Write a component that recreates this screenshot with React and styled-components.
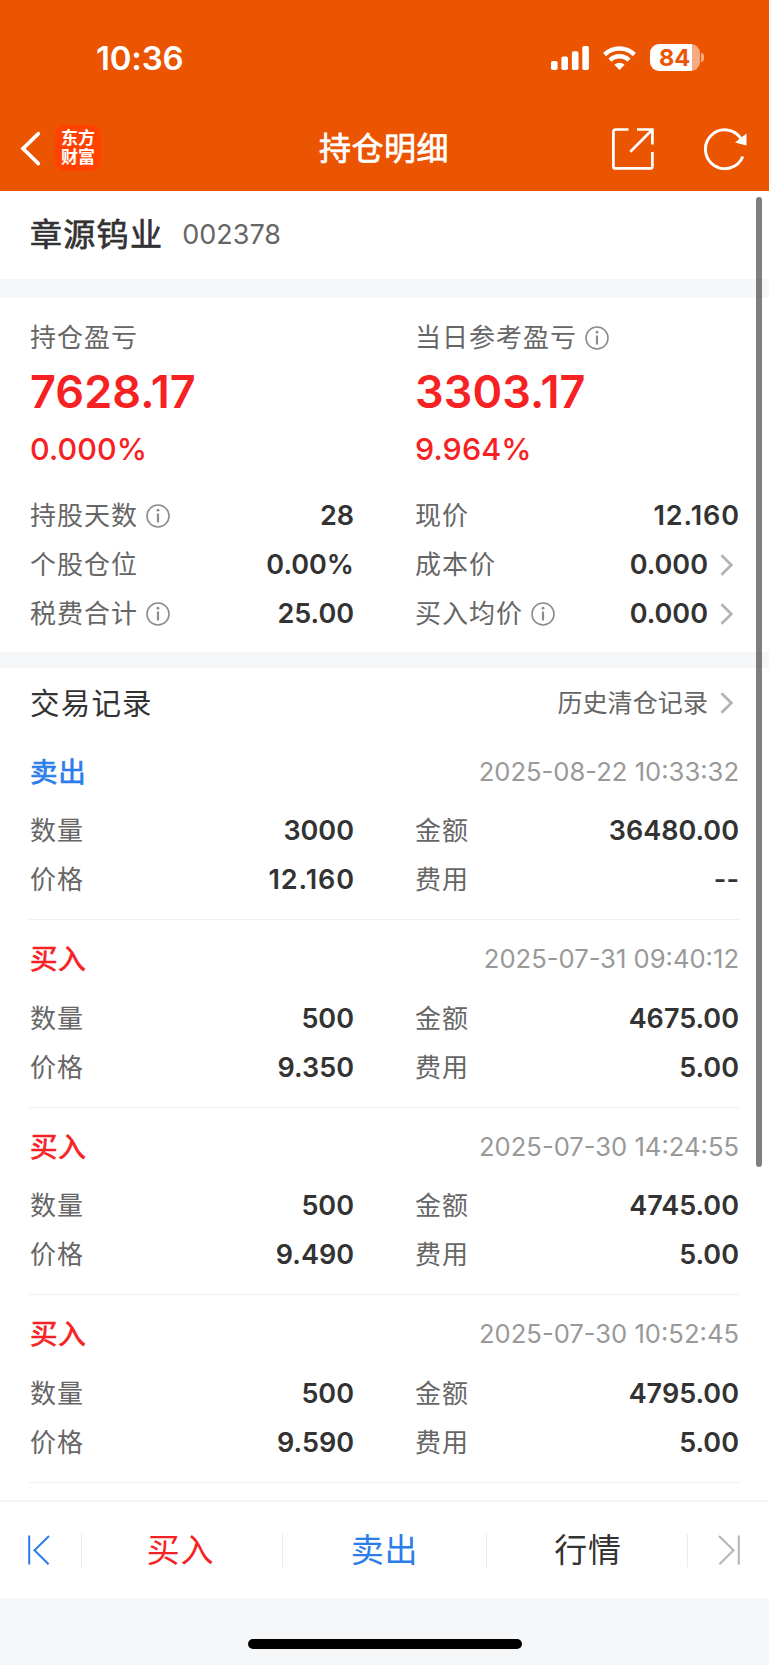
import React from "react";
import styled, { createGlobalStyle } from "styled-components";

const GlobalStyle = createGlobalStyle`
  * { box-sizing: border-box; }
  body {
    margin: 0;
    background: #f6f7f9;
    font-family: Inter, "Noto Sans CJK SC", sans-serif;
    color: #333;
  }
`;

const Screen = styled.div`
  position: relative;
  width: 769px;
  height: 1665px;
  overflow: hidden;
  display: flex;
  flex-direction: column;
  background: #f6f7f9;
`;

const Header = styled.header`
  height: 191px;
  flex: none;
  background: #eb5502;
  color: #fff;
`;

const StatusBar = styled.div`
  height: 106px;
  padding: 9px 65px 0 96px;
  display: flex;
  align-items: center;
  justify-content: space-between;
`;

const Clock = styled.span`
  font-size: 33px;
  font-weight: 600;
  line-height: 40px;
  letter-spacing: -0.2px;
`;

const StatusIcons = styled.div`
  display: flex;
  align-items: center;
`;

const SignalIcon = styled.svg`
  width: 38px;
  height: 24px;
  margin-right: 14px;
`;

const WifiIcon = styled.svg`
  width: 33px;
  height: 24px;
  margin-right: 14px;
`;

const Battery = styled.div`
  width: 50px;
  height: 27px;
  border-radius: 9px;
  background: linear-gradient(to right, #fff 42px, #f5aa80 42px);
  color: #eb5502;
  font-size: 23.5px;
  font-weight: 700;
  line-height: 28px;
  padding-right: 1px;
  text-align: center;
`;

const BatteryNub = styled.div`
  width: 3px;
  height: 9px;
  margin-left: 1px;
  border-radius: 0 3px 3px 0;
  background: #f5aa80;
`;

const NavBar = styled.div`
  height: 85px;
  padding: 0 22.5px 0 20px;
  display: grid;
  grid-template-columns: 1fr auto 1fr;
  align-items: center;
`;

const NavSide = styled.div`
  display: flex;
  align-items: center;
  gap: ${(p) => p.$gap}px;
  justify-content: ${(p) => (p.$end ? "flex-end" : "flex-start")};
`;

const NavTitle = styled.h1`
  margin: 0;
  padding-left: 1.5px;
  font-size: 32px;
  font-weight: 400;
  line-height: 40px;
  letter-spacing: 0.5px;
  -webkit-text-stroke: 0.7px #fff;
`;

const Logo = styled.div`
  width: 46px;
  height: 46px;
  margin-bottom: 2px;
  border-radius: 9px;
  background: #ff4200;
  font-size: 17px;
  font-weight: 700;
  line-height: 19px;
  padding-top: 4px;
  text-align: center;
`;

const Panel = styled.section`
  flex: none;
  background: #fff;
  padding: ${(p) => p.$pad || "0 30px"};
  margin-bottom: ${(p) => p.$after || 0}px;
`;

const StockLine = styled.div`
  height: 88px;
  display: flex;
  align-items: center;
`;

const StockName = styled.h2`
  margin: 0 19px 0 0;
  font-size: 32px;
  font-weight: 400;
  letter-spacing: 1.3px;
  line-height: 44px;
  -webkit-text-stroke: 0.7px #333;
`;

const StockCode = styled.span`
  font-size: 27px;
  line-height: 44px;
  color: #666;
`;

const Columns = styled.div`
  display: grid;
  grid-template-columns: 1fr 1fr;
  column-gap: 61px;
`;

const Label = styled.span`
  display: flex;
  align-items: center;
  gap: 8px;
  font-size: 26px;
  line-height: 40px;
  letter-spacing: 1px;
  color: #666;
`;

const BigValue = styled.div`
  margin-top: 4px;
  font-size: 45px;
  font-weight: 600;
  line-height: 60px;
  letter-spacing: 0.1px;
  color: #f62123;
`;

const Percent = styled.div`
  margin-top: 7px;
  font-size: 30.5px;
  font-weight: 550;
  line-height: 40px;
  letter-spacing: 0.1px;
  margin-bottom: 22px;
  color: #f62123;
`;

const Row = styled.div`
  height: 49px;
  display: flex;
  align-items: center;
  justify-content: space-between;
`;

const Value = styled.span`
  display: flex;
  align-items: center;
  font-size: 27px;
  font-weight: 600;
  line-height: 40px;
  letter-spacing: ${(p) => (p.$wide ? 0.9 : 0)}px;
  margin-right: ${(p) => (p.$wide ? -0.9 : 0)}px;
`;

const Arrow = styled.svg`
  width: 13px;
  height: 22px;
  margin: 0 6px 0 12px;
`;

const ListArea = styled.section`
  height: 832px;
  flex: none;
  overflow: hidden;
  background: #fff;
  padding: 0 29px;
`;

const ListHead = styled.div`
  height: 64.5px;
  padding: 5.5px 1px 0;
  display: flex;
  align-items: center;
  justify-content: space-between;
`;

const ListTitle = styled.h3`
  margin: 0;
  font-size: 29.5px;
  font-weight: 400;
  line-height: 44px;
  letter-spacing: 1.2px;
`;

const HistoryLink = styled.span`
  display: flex;
  align-items: center;
  font-size: 25px;
  line-height: 40px;
  letter-spacing: 0.1px;
  color: #666;
`;

const Record = styled.article`
  height: 187.5px;
  padding: 4px 1px 0;
  border-bottom: 1px solid #f0f0f0;
`;

const RecordHead = styled.div`
  height: 70px;
  display: flex;
  align-items: center;
  justify-content: space-between;
`;

const Side = styled.span`
  font-size: 27.5px;
  line-height: 40px;
  letter-spacing: 0.7px;
  color: ${(p) => p.$color};
  -webkit-text-stroke: 0.7px ${(p) => p.$color};
`;

const Time = styled.time`
  font-size: 25.6px;
  line-height: 40px;
  color: #999;
`;

const TabBar = styled.nav`
  height: 98px;
  flex: none;
  display: grid;
  grid-template-columns: 82px 201px 204px 201px 81px;
  align-items: center;
  background: #fff;
  border-top: 2px solid #f5f6f7;
`;

const Tab = styled.div`
  height: 33px;
  display: flex;
  align-items: center;
  justify-content: center;
  padding: ${(p) => p.$pad || 0};
  border-right: ${(p) => (p.$last ? "none" : "1px solid #ebebed")};
  color: ${(p) => p.$color};
  font-size: 33px;
  letter-spacing: 0.8px;
  line-height: 33px;
`;

const HomeArea = styled.footer`
  flex: 1;
  display: flex;
  justify-content: center;
  padding-top: 41px;
`;

const HomeIndicator = styled.div`
  width: 274px;
  height: 10px;
  border-radius: 5px;
  background: #000;
`;

const ScrollThumb = styled.div`
  position: absolute;
  top: 197px;
  right: 7px;
  width: 6px;
  height: 970px;
  border-radius: 3px;
  background: rgba(0, 0, 0, 0.5);
`;

const Info = () => (
  <svg width="24" height="24" viewBox="0 0 24 24" fill="none" stroke="#8c8c8c">
    <circle cx="12" cy="12" r="11" strokeWidth="1.6" />
    <path d="M12 9.5v9" strokeWidth="2.2" />
    <circle cx="12" cy="6.2" r="1.4" fill="#8c8c8c" stroke="none" />
  </svg>
);

const More = () => (
  <Arrow viewBox="0 0 13 22" fill="none" stroke="#b3b3b3" strokeWidth="2.7">
    <path d="M1.5 1.2L11.3 11L1.5 20.8" />
  </Arrow>
);

const Field = ({ label, value, info, more }) => (
  <Row>
    <Label>
      {label}
      {info && <Info />}
    </Label>
    <Value $wide={value.split("1").length > 2}>
      {value}
      {more && <More />}
    </Value>
  </Row>
);

const records = [
  { side: "卖出", time: "2025-08-22 10:33:32", qty: "3000", amount: "36480.00", price: "12.160", fee: "--" },
  { side: "买入", time: "2025-07-31 09:40:12", qty: "500", amount: "4675.00", price: "9.350", fee: "5.00" },
  { side: "买入", time: "2025-07-30 14:24:55", qty: "500", amount: "4745.00", price: "9.490", fee: "5.00" },
  { side: "买入", time: "2025-07-30 10:52:45", qty: "500", amount: "4795.00", price: "9.590", fee: "5.00" },
];

export default function App() {
  return (
    <Screen>
      <GlobalStyle />
      <Header>
        <StatusBar>
          <Clock>10:36</Clock>
          <StatusIcons>
            <SignalIcon viewBox="0 0 38 24" fill="#fff">
              <rect x="0" y="15" width="6.6" height="9" rx="1.8" />
              <rect x="10.4" y="10.5" width="6.6" height="13.5" rx="1.8" />
              <rect x="20.9" y="5.3" width="6.6" height="18.7" rx="1.8" />
              <rect x="31.3" y="0" width="6.6" height="24" rx="1.8" />
            </SignalIcon>
            <WifiIcon viewBox="0 0 33 24" fill="none" stroke="#fff" strokeWidth="4.4">
              <path d="M1.6 8.6a21.2 21.2 0 0 1 29.8 0" />
              <path d="M7 14.2a13.5 13.5 0 0 1 19 0" />
              <path d="M16.5 24l-5.1-5.2a7.3 7.3 0 0 1 10.2 0z" fill="#fff" stroke="none" />
            </WifiIcon>
            <Battery>84</Battery>
            <BatteryNub />
          </StatusIcons>
        </StatusBar>
        <NavBar>
          <NavSide $gap={14}>
            <svg width="21" height="36" viewBox="0 0 21 36" fill="none" stroke="#fff" strokeWidth="3.6" strokeLinecap="round">
              <path d="M18.4 2.6L3 17.6L18.4 32.6" />
            </svg>
            <Logo>
              东方
              <br />
              财富
            </Logo>
          </NavSide>
          <NavTitle>持仓明细</NavTitle>
          <NavSide $end $gap={50}>
            <svg width="42" height="42" viewBox="0 0 42 42" fill="none" stroke="#fff" strokeWidth="2.7">
              <path d="M16.5 1.5H3.4a2 2 0 0 0-2 2V38.4a2 2 0 0 0 2 2H38.4a2 2 0 0 0 2-2V24" />
              <path d="M25 1.5H40.4V16.5M40 2L18.3 23.8" />
            </svg>
            <svg width="43" height="42" viewBox="0 0 43 42" fill="none" stroke="#fff" strokeWidth="3">
              <path d="M38.8 28.5A19.4 19.4 0 1 1 37 10.5" />
              <path d="M42.5 5.5V17.5L31 14.5Z" fill="#fff" stroke="none" />
            </svg>
          </NavSide>
        </NavBar>
      </Header>

      <Panel $after={19}>
        <StockLine>
          <StockName>章源钨业</StockName>
          <StockCode>002378</StockCode>
        </StockLine>
      </Panel>

      <Panel $pad="20px 30px 14px" $after={16}>
        <Columns>
          <div>
            <Label>持仓盈亏</Label>
            <BigValue>7628.17</BigValue>
            <Percent>0.000%</Percent>
          </div>
          <div>
            <Label>
              当日参考盈亏
              <Info />
            </Label>
            <BigValue>3303.17</BigValue>
            <Percent>9.964%</Percent>
          </div>
          <Field label="持股天数" value="28" info />
          <Field label="现价" value="12.160" />
          <Field label="个股仓位" value="0.00%" />
          <Field label="成本价" value="0.000" more />
          <Field label="税费合计" value="25.00" info />
          <Field label="买入均价" value="0.000" info more />
        </Columns>
      </Panel>

      <ListArea>
        <ListHead>
          <ListTitle>交易记录</ListTitle>
          <HistoryLink>
            历史清仓记录
            <More />
          </HistoryLink>
        </ListHead>
        {records.map((r) => (
          <Record key={r.time}>
            <RecordHead>
              <Side $color={r.side === "卖出" ? "#2b7de9" : "#f62123"}>{r.side}</Side>
              <Time>{r.time}</Time>
            </RecordHead>
            <Columns>
              <Field label="数量" value={r.qty} />
              <Field label="金额" value={r.amount} />
              <Field label="价格" value={r.price} />
              <Field label="费用" value={r.fee} />
            </Columns>
          </Record>
        ))}
      </ListArea>

      <TabBar>
        <Tab $pad="0 4px 0 0">
          <svg width="22" height="30" viewBox="0 0 22 30" fill="none" stroke="#2b7de9" strokeWidth="2">
            <path d="M1.2 0.5V29.5M21 1L6.5 15.2L20.6 29.3" />
          </svg>
        </Tab>
        <Tab $color="#f62123" $pad="0 3px 0 0">买入</Tab>
        <Tab $color="#2b7de9">卖出</Tab>
        <Tab $color="#333" $pad="0 0 0 2px">行情</Tab>
        <Tab $last>
          <svg width="22" height="30" viewBox="0 0 22 30" fill="none" stroke="#b8b8b8" strokeWidth="2.2">
            <path d="M20.8 0.5V29.5M1 1L15.5 15.2L1.4 29.3" />
          </svg>
        </Tab>
      </TabBar>
      <HomeArea>
        <HomeIndicator />
      </HomeArea>
      <ScrollThumb />
    </Screen>
  );
}
